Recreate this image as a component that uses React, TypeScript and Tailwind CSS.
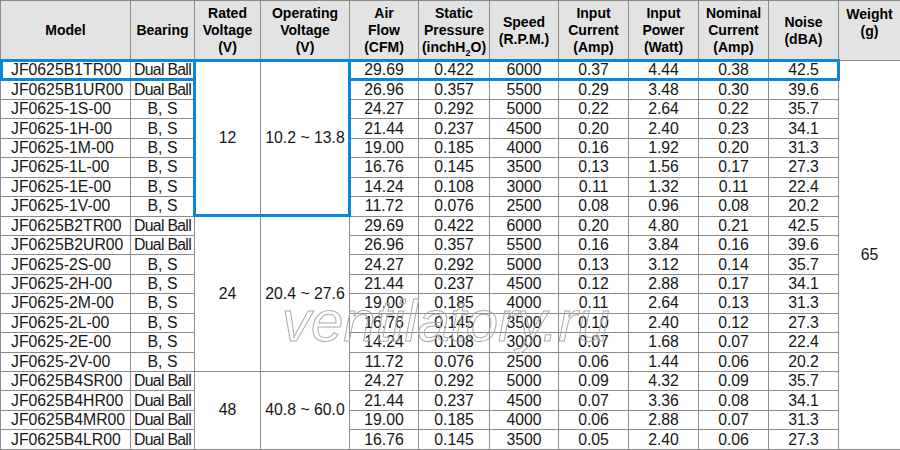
import React from 'react';

type Row = {
  model: string;
  bearing: string;
  flow: string;
  pressure: string;
  speed: string;
  current: string;
  power: string;
  nominal: string;
  noise: string;
};

const groups: { rated: string; range: string; rows: Row[] }[] = [
  {
    rated: '12',
    range: '10.2 ~ 13.8',
    rows: [
      { model: 'JF0625B1TR00', bearing: 'Dual Ball', flow: '29.69', pressure: '0.422', speed: '6000', current: '0.37', power: '4.44', nominal: '0.38', noise: '42.5' },
      { model: 'JF0625B1UR00', bearing: 'Dual Ball', flow: '26.96', pressure: '0.357', speed: '5500', current: '0.29', power: '3.48', nominal: '0.30', noise: '39.6' },
      { model: 'JF0625-1S-00', bearing: 'B, S', flow: '24.27', pressure: '0.292', speed: '5000', current: '0.22', power: '2.64', nominal: '0.22', noise: '35.7' },
      { model: 'JF0625-1H-00', bearing: 'B, S', flow: '21.44', pressure: '0.237', speed: '4500', current: '0.20', power: '2.40', nominal: '0.23', noise: '34.1' },
      { model: 'JF0625-1M-00', bearing: 'B, S', flow: '19.00', pressure: '0.185', speed: '4000', current: '0.16', power: '1.92', nominal: '0.20', noise: '31.3' },
      { model: 'JF0625-1L-00', bearing: 'B, S', flow: '16.76', pressure: '0.145', speed: '3500', current: '0.13', power: '1.56', nominal: '0.17', noise: '27.3' },
      { model: 'JF0625-1E-00', bearing: 'B, S', flow: '14.24', pressure: '0.108', speed: '3000', current: '0.11', power: '1.32', nominal: '0.11', noise: '22.4' },
      { model: 'JF0625-1V-00', bearing: 'B, S', flow: '11.72', pressure: '0.076', speed: '2500', current: '0.08', power: '0.96', nominal: '0.08', noise: '20.2' },
    ],
  },
  {
    rated: '24',
    range: '20.4 ~ 27.6',
    rows: [
      { model: 'JF0625B2TR00', bearing: 'Dual Ball', flow: '29.69', pressure: '0.422', speed: '6000', current: '0.20', power: '4.80', nominal: '0.21', noise: '42.5' },
      { model: 'JF0625B2UR00', bearing: 'Dual Ball', flow: '26.96', pressure: '0.357', speed: '5500', current: '0.16', power: '3.84', nominal: '0.16', noise: '39.6' },
      { model: 'JF0625-2S-00', bearing: 'B, S', flow: '24.27', pressure: '0.292', speed: '5000', current: '0.13', power: '3.12', nominal: '0.14', noise: '35.7' },
      { model: 'JF0625-2H-00', bearing: 'B, S', flow: '21.44', pressure: '0.237', speed: '4500', current: '0.12', power: '2.88', nominal: '0.17', noise: '34.1' },
      { model: 'JF0625-2M-00', bearing: 'B, S', flow: '19.00', pressure: '0.185', speed: '4000', current: '0.11', power: '2.64', nominal: '0.13', noise: '31.3' },
      { model: 'JF0625-2L-00', bearing: 'B, S', flow: '16.76', pressure: '0.145', speed: '3500', current: '0.10', power: '2.40', nominal: '0.12', noise: '27.3' },
      { model: 'JF0625-2E-00', bearing: 'B, S', flow: '14.24', pressure: '0.108', speed: '3000', current: '0.07', power: '1.68', nominal: '0.07', noise: '22.4' },
      { model: 'JF0625-2V-00', bearing: 'B, S', flow: '11.72', pressure: '0.076', speed: '2500', current: '0.06', power: '1.44', nominal: '0.06', noise: '20.2' },
    ],
  },
  {
    rated: '48',
    range: '40.8 ~ 60.0',
    rows: [
      { model: 'JF0625B4SR00', bearing: 'Dual Ball', flow: '24.27', pressure: '0.292', speed: '5000', current: '0.09', power: '4.32', nominal: '0.09', noise: '35.7' },
      { model: 'JF0625B4HR00', bearing: 'Dual Ball', flow: '21.44', pressure: '0.237', speed: '4500', current: '0.07', power: '3.36', nominal: '0.08', noise: '34.1' },
      { model: 'JF0625B4MR00', bearing: 'Dual Ball', flow: '19.00', pressure: '0.185', speed: '4000', current: '0.06', power: '2.88', nominal: '0.07', noise: '31.3' },
      { model: 'JF0625B4LR00', bearing: 'Dual Ball', flow: '16.76', pressure: '0.145', speed: '3500', current: '0.05', power: '2.40', nominal: '0.06', noise: '27.3' },
    ],
  },
];

const widths = [130, 64, 66, 89, 69, 71, 69, 70, 70, 70, 70, 62];

const th = 'border border-[#8c8c8c] bg-[#e3e3e3] font-bold text-[14px] leading-[17px] text-black text-center align-middle p-0';
const td = 'border border-[#8c8c8c] text-[15.8px] leading-[18px] text-[#161616] text-center align-middle p-0 whitespace-nowrap';

export default function App() {
  return (
    <div className="relative w-[900px] h-[450px] overflow-hidden bg-white font-['Liberation_Sans',Arial,sans-serif]">
      <table className="w-[900px] table-fixed border-collapse">
        <colgroup>
          {widths.map((w, i) => (
            <col key={i} style={{ width: w }} />
          ))}
        </colgroup>
        <thead>
          <tr className="h-[60px]">
            <th className={th}>Model</th>
            <th className={th}>Bearing</th>
            <th className={th}>Rated<br />Voltage<br />(V)</th>
            <th className={th}>Operating<br />Voltage<br />(V)</th>
            <th className={th}>Air<br />Flow<br />(CFM)</th>
            <th className={th}>Static<br />Pressure<br />(inchH<sub className="text-[9px] align-[-2px]">2</sub>O)</th>
            <th className={th}>Speed<br />(R.P.M.)</th>
            <th className={th}>Input<br />Current<br />(Amp)</th>
            <th className={th}>Input<br />Power<br />(Watt)</th>
            <th className={th}>Nominal<br />Current<br />(Amp)</th>
            <th className={th}>Noise<br />(dBA)</th>
            <th className={`${th} align-top pt-[5px]`}>Weight<br />(g)</th>
          </tr>
        </thead>
        <tbody>
          {groups.map((g, gi) =>
            g.rows.map((r, ri) => (
              <tr key={r.model} className="h-[19.45px]">
                <td className={`${td} text-left pl-[10px]`}>{r.model}</td>
                <td className={`${td} ${r.bearing === 'Dual Ball' ? 'tracking-[-0.7px]' : ''}`}>{r.bearing}</td>
                {ri === 0 && (
                  <>
                    <td className={td} rowSpan={g.rows.length}>{g.rated}</td>
                    <td className={td} rowSpan={g.rows.length}>{g.range}</td>
                  </>
                )}
                <td className={td}>{r.flow}</td>
                <td className={td}>{r.pressure}</td>
                <td className={td}>{r.speed}</td>
                <td className={td}>{r.current}</td>
                <td className={td}>{r.power}</td>
                <td className={td}>{r.nominal}</td>
                <td className={td}>{r.noise}</td>
                {gi === 0 && ri === 0 && (
                  <td className={td} rowSpan={20}>65</td>
                )}
              </tr>
            ))
          )}
        </tbody>
      </table>

      {/* highlight frames */}
      <div className="absolute left-0 top-[59px] w-[196px] h-[22px] border-[3px] border-[#0a88d8] pointer-events-none" />
      <div className="absolute left-[193px] top-[59px] w-[158px] h-[158px] border-[3px] border-[#0a88d8] pointer-events-none" />
      <div className="absolute left-[348px] top-[59px] w-[492px] h-[22px] border-[3px] border-[#0a88d8] pointer-events-none" />

      {/* watermark */}
      <div className="absolute left-[282px] top-[292px] text-[58px] leading-[58px] italic text-transparent [-webkit-text-stroke:1px_#ababab] pointer-events-none select-none">
        ventilatory.ru
      </div>
    </div>
  );
}
